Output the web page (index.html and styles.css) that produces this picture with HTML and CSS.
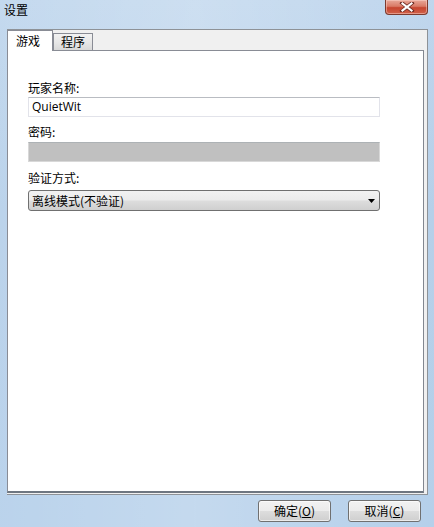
FILE: index.html
```html
<!DOCTYPE html>
<html lang="zh-CN">
<head>
<meta charset="utf-8">
<title>设置</title>
<link rel="stylesheet" href="styles.css">
</head>
<body>
<div class="window">
  <div class="titlebar">
    <span class="title">设置</span>
    <span class="close" aria-label="关闭">
      <svg width="16" height="10" viewBox="0 0 16 10">
        <path d="M3 1 L13 9 M13 1 L3 9" stroke="#6b2a22" stroke-width="3.6" stroke-linecap="square"/>
        <path d="M3.5 1.5 L12.5 8.5 M12.5 1.5 L3.5 8.5" stroke="#ffffff" stroke-width="2.2" stroke-linecap="square"/>
      </svg>
    </span>
  </div>
  <div class="tabctl">
    <div class="tabstrip">
      <span class="tab active">游戏</span>
      <span class="tab">程序</span>
    </div>
    <div class="panel">
      <label class="label l1">玩家名称:</label>
      <div class="textbox">QuietWit</div>
      <label class="label l2">密码:</label>
      <div class="textbox disabled"></div>
      <label class="label l3">验证方式:</label>
      <div class="combo">
        <span>离线模式(不验证)</span>
        <svg class="arrow" width="7" height="4" viewBox="0 0 7 4"><path d="M0 0 H7 L3.5 4 Z" fill="#000"/></svg>
      </div>
    </div>
  </div>
  <div class="buttons">
    <button class="btn">确定(<u>O</u>)</button>
    <button class="btn">取消(<u>C</u>)</button>
  </div>
</div>
</body>
</html>
```
FILE: styles.css
```css
html, body {
  margin: 0;
  padding: 0;
}
body {
  width: 434px;
  height: 527px;
  overflow: hidden;
  font-family: "Noto Sans CJK SC", "Open Sans", sans-serif;
  font-size: 12px;
  color: #000;
}
.window {
  width: 434px;
  height: 527px;
  display: flex;
  flex-direction: column;
  background:
    linear-gradient(90deg, rgba(255,255,255,0.12) 0%, rgba(255,255,255,0.25) 45%, rgba(255,255,255,0.05) 100%),
    linear-gradient(180deg, #bcd4ec 0%, #b2cde8 40%, #b1cde9 100%);
}
.titlebar {
  height: 29px;
  display: flex;
  justify-content: space-between;
  align-items: flex-start;
  padding-left: 4px;
  padding-right: 6px;
  box-sizing: border-box;
}
.title {
  margin-top: 1px;
  line-height: 18px;
  font-size: 12px;
}
.close {
  width: 43px;
  height: 15px;
  box-sizing: border-box;
  border: 1px solid #7c3a2e;
  border-top: none;
  border-radius: 0 0 4px 4px;
  background: linear-gradient(180deg, #e8a899 0%, #d97a66 45%, #c6452f 55%, #d0614a 100%);
  box-shadow: inset 0 0 0 1px rgba(255,220,210,0.45);
  display: flex;
  align-items: center;
  justify-content: center;
}
.close svg { display: block; }
.tabctl {
  margin-left: 7px;
  width: 421px;
  height: 466px;
  box-sizing: border-box;
  display: flex;
  flex-direction: column;
  border: 1px solid #8e9297;
  border-left: none;
  background: #f0f0f0;
  padding-right: 3px;
  padding-bottom: 1px;
}
.tabstrip {
  height: 20px;
  display: flex;
  align-items: flex-end;
  background: #f0f0f0;
}
.tab {
  box-sizing: border-box;
  height: 17px;
  padding: 0 7px;
  border: 1px solid #898c95;
  border-bottom: none;
  background: linear-gradient(180deg, #f2f2f2 0%, #e6e6e6 55%, #d9d9d9 100%);
  line-height: 16px;
  font-size: 12px;
}
.tab.active {
  height: 21px;
  width: 46px;
  margin-top: -1px;
  padding: 0 0 0 8px;
  background: #ffffff;
  position: relative;
  z-index: 1;
  margin-bottom: -1px;
  line-height: 19px;
  border-color: #898c95;
}
.panel {
  flex: 1;
  background: #ffffff;
  border: 1px solid #898c95;
  border-right-color: #828790;
  border-bottom: 2px solid #6e7680;
  padding: 29px 0 0 20px;
  display: flex;
  flex-direction: column;
  align-items: flex-start;
}
.label {
  line-height: 16px;
  height: 16px;
  font-size: 12px;
}
.l1 { margin-bottom: 1px; }
.l2 { margin-top: 7px; margin-bottom: 2px; }
.l3 { margin-top: 8px; margin-bottom: 4px; }
.textbox {
  width: 352px;
  height: 20px;
  box-sizing: border-box;
  border: 1px solid #e2e3ea;
  border-top-color: #b9bcc2;
  background: #fff;
  font-family: "Open Sans", "Noto Sans", sans-serif;
  font-size: 12px;
  line-height: 18px;
  padding-left: 3px;
}
.textbox.disabled {
  background: #c0c0c0;
  border: 1px solid #d8d8d8;
  border-top-color: #adb2b5;
}
.combo {
  width: 352px;
  height: 21px;
  box-sizing: border-box;
  border: 1px solid #707070;
  border-radius: 3px;
  background: linear-gradient(180deg, #f2f2f2 0%, #ebebeb 49%, #dddddd 51%, #cfcfcf 100%);
  display: flex;
  align-items: center;
  justify-content: space-between;
  padding: 0 4px 0 3px;
  font-size: 12px;
  line-height: 19px;
}
.arrow { display: block; margin-top: 1px; }
.buttons {
  display: flex;
  justify-content: flex-end;
  gap: 17px;
  padding: 5px 13px 0 0;
}
.btn {
  width: 73px;
  height: 22px;
  box-sizing: border-box;
  border: 1px solid #707070;
  border-radius: 3px;
  background: linear-gradient(180deg, #f2f2f2 0%, #ebebeb 49%, #dddddd 51%, #cfcfcf 100%);
  box-shadow: inset 0 0 0 1px rgba(255,255,255,0.6);
  font-family: "Noto Sans CJK SC", "Open Sans", sans-serif;
  font-size: 12px;
  line-height: 18px;
  padding: 0;
  color: #000;
}
.btn u { text-decoration: underline; }
```
